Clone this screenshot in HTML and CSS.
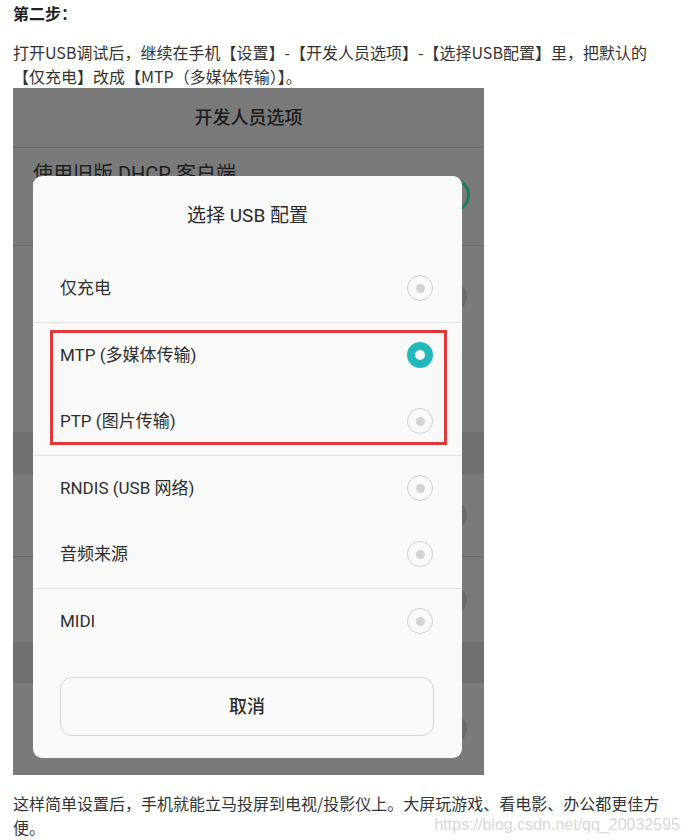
FILE: index.html
```html
<!DOCTYPE html>
<html lang="zh-CN">
<head>
<meta charset="utf-8">
<title>第二步</title>
<link rel="stylesheet" href="styles.css">
</head>
<body>
<article class="post">
  <p class="step">第二步：</p>
  <p class="para">打开USB调试后，继续在手机【设置】-【开发人员选项】-【选择USB配置】里，把默认的【仅充电】改成【MTP（多媒体传输）】。</p>
  <figure class="shot">
    <div class="bg-screen">
      <div class="bg-header">开发人员选项</div>
      <div class="bg-row bg-row-a"><span class="bg-label">使用旧版 DHCP 客户端</span><span class="bg-toggle"></span></div>
      <div class="bg-row bg-row-b"><span class="knob"></span></div>
      <div class="bg-band"></div>
      <div class="bg-row bg-row-c"><span class="knob"></span></div>
      <div class="bg-row bg-row-d"><span class="knob"></span></div>
      <div class="bg-band bg-band-2"></div>
      <div class="bg-row bg-row-e"><span class="knob"></span></div>
    </div>
    <div class="dialog">
      <div class="dlg-title">选择 USB 配置</div>
      <ul class="options">
        <li class="opt">仅充电<span class="radio"></span></li>
        <li class="opt sep">MTP (多媒体传输)<span class="radio on"></span></li>
        <li class="opt">PTP (图片传输)<span class="radio"></span></li>
        <li class="opt sep">RNDIS (USB 网络)<span class="radio"></span></li>
        <li class="opt">音频来源<span class="radio"></span></li>
        <li class="opt sep">MIDI<span class="radio"></span></li>
      </ul>
      <div class="cancel">取消</div>
      <div class="highlight"></div>
    </div>
  </figure>
  <p class="para para-end">这样简单设置后，手机就能立马投屏到电视/投影仪上。大屏玩游戏、看电影、办公都更佳方便。</p>
  <span class="watermark">https://blog.csdn.net/qq_20032595</span>
</article>
</body>
</html>
```

FILE: styles.css
```css
html, body {
  margin: 0;
  padding: 0;
  background: #ffffff;
}

.post {
  position: relative;
  padding: 0 13px;
  font-family: "Noto Sans CJK SC", "Liberation Sans", sans-serif;
  font-size: 16px;
  line-height: 24px;
  color: #333333;
}

.step {
  margin: 0;
  padding-top: 1px;
  font-weight: bold;
  color: #222222;
}

.para {
  margin: 15px 0 0;
}

.para-end {
  margin-top: 16px;
}

.shot {
  position: relative;
  margin: 0;
  width: 471px;
  height: 687px;
  background: #7a7a7a;
  overflow: hidden;
  font-family: Roboto, "Noto Sans CJK SC", sans-serif;
}

/* underlying settings screen (dimmed) */
.bg-screen {
  display: flex;
  flex-direction: column;
}

.bg-header {
  height: 59px;
  border-bottom: 1px solid #6c6c6c;
  display: flex;
  align-items: center;
  justify-content: center;
  font-size: 18px;
  font-weight: 500;
  color: #1c1c1c;
}

.bg-row {
  display: flex;
  justify-content: flex-end;
  align-items: center;
  padding-right: 17px;
}

.bg-row-a {
  height: 97px;
  border-bottom: 1px solid #6c6c6c;
  justify-content: space-between;
  align-items: flex-start;
  padding-left: 20px;
  padding-right: 14px;
}

.bg-label {
  margin-top: 12px;
  font-size: 20px;
  line-height: 28px;
  color: #1e1e1e;
}

.bg-toggle {
  margin-top: 30px;
  width: 52px;
  height: 34px;
  box-sizing: border-box;
  border: 3px solid #1d7c64;
  border-radius: 17px;
}

.bg-row-b {
  height: 186px;
  align-items: flex-start;
}

.bg-row-b .knob {
  margin-top: 37px;
}

.bg-band {
  height: 42px;
  background: #707070;
}

.bg-band-2 {
  height: 41px;
}

.bg-row-c {
  height: 82px;
  border-bottom: 1px solid #6c6c6c;
}

.bg-row-d {
  height: 85px;
}

.bg-row-e {
  height: 92px;
}

.knob {
  width: 28px;
  height: 28px;
  border-radius: 50%;
  background: #6b6b6b;
}

/* dialog */
.dialog {
  position: absolute;
  left: 20px;
  top: 88px;
  width: 429px;
  background: #f9f9f9;
  border-radius: 9px;
  display: flex;
  flex-direction: column;
}

.dlg-title {
  height: 79px;
  display: flex;
  align-items: center;
  justify-content: center;
  font-size: 19px;
  color: #2a2a2a;
}

.options {
  list-style: none;
  margin: 0;
  padding: 0;
}

.opt {
  height: 66.5px;
  box-sizing: border-box;
  display: flex;
  align-items: center;
  justify-content: space-between;
  padding: 0 29px 0 27px;
  font-size: 17px;
  color: #2e2e2e;
}

.opt.sep {
  border-top: 1px solid #e3e3e3;
}

.radio {
  position: relative;
  width: 26px;
  height: 26px;
  box-sizing: border-box;
  border: 1px solid #d0d0d0;
  border-radius: 50%;
  display: flex;
  align-items: center;
  justify-content: center;
}

.radio::after {
  content: "";
  width: 9px;
  height: 9px;
  border-radius: 50%;
  background: #d3d3d3;
}

.radio.on {
  border: 8px solid #22b8bc;
  background: #ffffff;
}

.radio.on::after {
  display: none;
}

.cancel {
  margin: 23px 28px 22px 27px;
  height: 59px;
  box-sizing: border-box;
  border: 1px solid #d6d6d6;
  border-radius: 12px;
  display: flex;
  align-items: center;
  justify-content: center;
  font-size: 18px;
  font-weight: 500;
  color: #2e2e2e;
}

.highlight {
  position: absolute;
  left: 17px;
  top: 154px;
  width: 397px;
  height: 115px;
  box-sizing: border-box;
  border: 3px solid #de3a3a;
}

.watermark {
  position: absolute;
  right: 4px;
  top: 817px;
  font-family: "Liberation Sans", sans-serif;
  font-size: 16px;
  line-height: 16px;
  color: #d8d8d8;
}
```
